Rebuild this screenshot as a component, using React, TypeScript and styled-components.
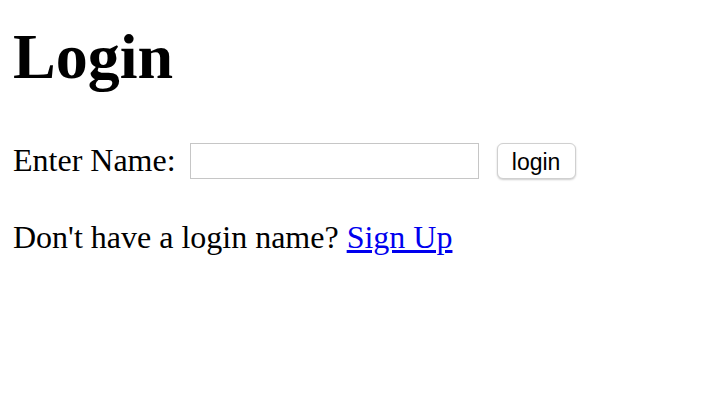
import React from 'react';
import styled, { createGlobalStyle } from 'styled-components';

const GlobalStyle = createGlobalStyle`
  html, body {
    margin: 0;
    padding: 0;
    background: #ffffff;
  }
  body {
    font-family: "Liberation Serif", "Times New Roman", serif;
    color: #000000;
  }
`;

const Page = styled.div`
  padding: 12px 13px;
`;

const Title = styled.h1`
  margin: 6px 0 0 0;
  font-size: 64px;
  font-weight: bold;
  line-height: 78px;
`;

const LoginRow = styled.form`
  display: flex;
  align-items: center;
  margin-top: 46px;
  font-size: 32px;
`;

const Label = styled.label`
  margin-right: 14px;
`;

const NameInput = styled.input`
  width: 289px;
  height: 36px;
  box-sizing: border-box;
  border: 1px solid #c6c6c6;
  border-radius: 0;
  margin: 0 18px 0 0;
  padding: 2px 6px;
  font-size: 20px;
  outline: none;
`;

const LoginButton = styled.button`
  height: 36px;
  width: 79px;
  box-sizing: border-box;
  border: 1px solid #d0d0d0;
  border-radius: 6px;
  background: #ffffff;
  box-shadow: 0 1px 2px rgba(0, 0, 0, 0.2);
  font-family: "Liberation Sans", Arial, sans-serif;
  font-size: 23px;
  color: #000000;
  padding: 3px 0 0 0;
`;

const Prompt = styled.p`
  margin: 40px 0 0 0;
  font-size: 32px;
`;

const SignUpLink = styled.a`
  color: #0000ee;
  text-decoration: underline;
`;

export default function App() {
  return (
    <Page>
      <GlobalStyle />
      <Title>Login</Title>
      <LoginRow onSubmit={(e) => e.preventDefault()}>
        <Label htmlFor="name">Enter Name:</Label>
        <NameInput id="name" type="text" />
        <LoginButton type="submit">login</LoginButton>
      </LoginRow>
      <Prompt>
        Don't have a login name? <SignUpLink href="#">Sign Up</SignUpLink>
      </Prompt>
    </Page>
  );
}
